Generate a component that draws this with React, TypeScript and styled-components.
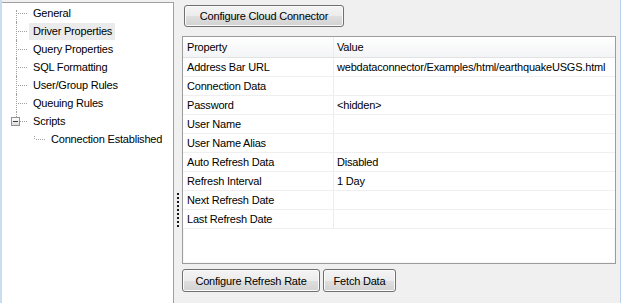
import React from 'react';
import styled, { createGlobalStyle } from 'styled-components';

const GlobalStyle = createGlobalStyle`
  html, body {
    margin: 0;
    padding: 0;
    background: #f0f0f0;
  }
  body {
    font-family: "Liberation Sans", Arial, sans-serif;
    font-size: 11px;
    letter-spacing: -0.2px;
    color: #000;
  }
`;

const Window = styled.div`
  width: 621px;
  height: 303px;
  box-sizing: border-box;
  display: flex;
  background: #f0f0f0;
  border-left: 2px solid #c9dcf0;
  border-right: 1px solid #b9d1ec;
`;

const TreePanel = styled.div`
  width: 172px;
  margin-top: 2px;
  background: #fff;
  border-top: 1px solid #a0a0a0;
  border-right: 1px solid #a0a0a0;
  padding-top: 1px;
  box-sizing: border-box;
`;

const TreeRow = styled.div<{ $depth?: number }>`
  display: flex;
  align-items: center;
  height: 18px;
  padding-left: ${p => (p.$depth || 0) * 18}px;
`;

const Connector = styled.span<{ $first?: boolean; $last?: boolean }>`
  position: relative;
  width: 27px;
  height: 18px;
  flex: none;

  &::before {
    content: '';
    position: absolute;
    left: 14px;
    top: ${p => (p.$first ? '6px' : '0')};
    bottom: ${p => (p.$last ? '9px' : '0')};
    border-left: 1px dotted #a0a0a0;
  }

  &::after {
    content: '';
    position: absolute;
    left: 16px;
    right: 2px;
    top: 9px;
    border-top: 1px dotted #a0a0a0;
  }
`;

const Expander = styled.span`
  position: absolute;
  z-index: 1;
  left: 9px;
  top: 5px;
  width: 7px;
  height: 7px;
  border: 1px solid #919191;
  background: linear-gradient(#ffffff, #dcdcdc);
  display: flex;
  align-items: center;
  justify-content: center;

  &::before {
    content: '';
    width: 5px;
    height: 1px;
    background: #3a3a3a;
  }
`;

const Label = styled.span<{ $selected?: boolean }>`
  padding: 2px 3px 2px 4px;
  line-height: 13px;
  background: ${p => (p.$selected ? '#ebebeb' : 'transparent')};
  white-space: nowrap;
`;

const Splitter = styled.div`
  width: 8px;
  flex: none;
  display: flex;
  justify-content: center;
  padding-top: 193px;
  box-sizing: border-box;
`;

const Grip = styled.div`
  width: 2px;
  height: 34px;
  margin-left: -1px;
  background: repeating-linear-gradient(
    to bottom,
    #1a1a1a 0px,
    #1a1a1a 2px,
    transparent 2px,
    transparent 4px
  );
`;

const Main = styled.div`
  flex: 1;
  display: flex;
  flex-direction: column;
  padding: 5px 4px 11px 0;
  min-width: 0;
`;

const Button = styled.button<{ $w: number; $h?: number }>`
  width: ${p => p.$w}px;
  height: ${p => p.$h || 23}px;
  padding: 0;
  font-family: inherit;
  font-size: 11px;
  letter-spacing: -0.2px;
  color: #000;
  border: 1px solid #707070;
  border-radius: 3px;
  background: linear-gradient(#f4f4f4 0%, #ececec 50%, #dfdfdf 51%, #d2d2d2 100%);
  box-shadow: inset 0 0 0 1px #fbfbfb;
  flex: none;
`;

const TopBar = styled.div`
  padding-left: 2px;
  margin-bottom: 9px;
`;

const Grid = styled.div`
  flex: 1;
  background: #fff;
  border: 1px solid #9c9c9c;
  box-shadow: inset 0 0 0 1px #f7f7f7;
`;

const Row = styled.div<{ $header?: boolean }>`
  display: grid;
  grid-template-columns: 151px 1fr;
  height: ${p => (p.$header ? 20 : 18)}px;
  border-bottom: 1px solid ${p => (p.$header ? '#e2e2e2' : '#efefef')};
  background: ${p => (p.$header ? 'linear-gradient(#ffffff, #f3f4f6)' : '#fff')};
`;

const Cell = styled.div<{ $first?: boolean }>`
  display: flex;
  align-items: center;
  padding-left: ${p => (p.$first ? 4 : 3)}px;
  border-right: ${p => (p.$first ? '1px solid #ececec' : 'none')};
  white-space: nowrap;
  overflow: hidden;
`;

const BottomBar = styled.div`
  display: flex;
  gap: 3px;
  margin-top: 5px;
`;

const tree = [
  'General',
  'Driver Properties',
  'Query Properties',
  'SQL Formatting',
  'User/Group Rules',
  'Queuing Rules',
];

const props: [string, string][] = [
  ['Address Bar URL', 'webdataconnector/Examples/html/earthquakeUSGS.html'],
  ['Connection Data', ''],
  ['Password', '<hidden>'],
  ['User Name', ''],
  ['User Name Alias', ''],
  ['Auto Refresh Data', 'Disabled'],
  ['Refresh Interval', '1 Day'],
  ['Next Refresh Date', ''],
  ['Last Refresh Date', ''],
];

export default function App() {
  return (
    <>
      <GlobalStyle />
      <Window>
        <TreePanel>
          {tree.map((name, i) => (
            <TreeRow key={name}>
              <Connector $first={i === 0} />
              <Label $selected={name === 'Driver Properties'}>{name}</Label>
            </TreeRow>
          ))}
          <TreeRow>
            <Connector $last>
              <Expander />
            </Connector>
            <Label>Scripts</Label>
          </TreeRow>
          <TreeRow $depth={1}>
            <Connector $first $last />
            <Label>Connection Established</Label>
          </TreeRow>
        </TreePanel>
        <Splitter>
          <Grip />
        </Splitter>
        <Main>
          <TopBar>
            <Button $w={160} $h={22}>Configure Cloud Connector</Button>
          </TopBar>
          <Grid>
            <Row $header>
              <Cell $first>Property</Cell>
              <Cell>Value</Cell>
            </Row>
            {props.map(([k, v]) => (
              <Row key={k}>
                <Cell $first>{k}</Cell>
                <Cell>{v}</Cell>
              </Row>
            ))}
          </Grid>
          <BottomBar>
            <Button $w={138}>Configure Refresh Rate</Button>
            <Button $w={73}>Fetch Data</Button>
          </BottomBar>
        </Main>
      </Window>
    </>
  );
}
